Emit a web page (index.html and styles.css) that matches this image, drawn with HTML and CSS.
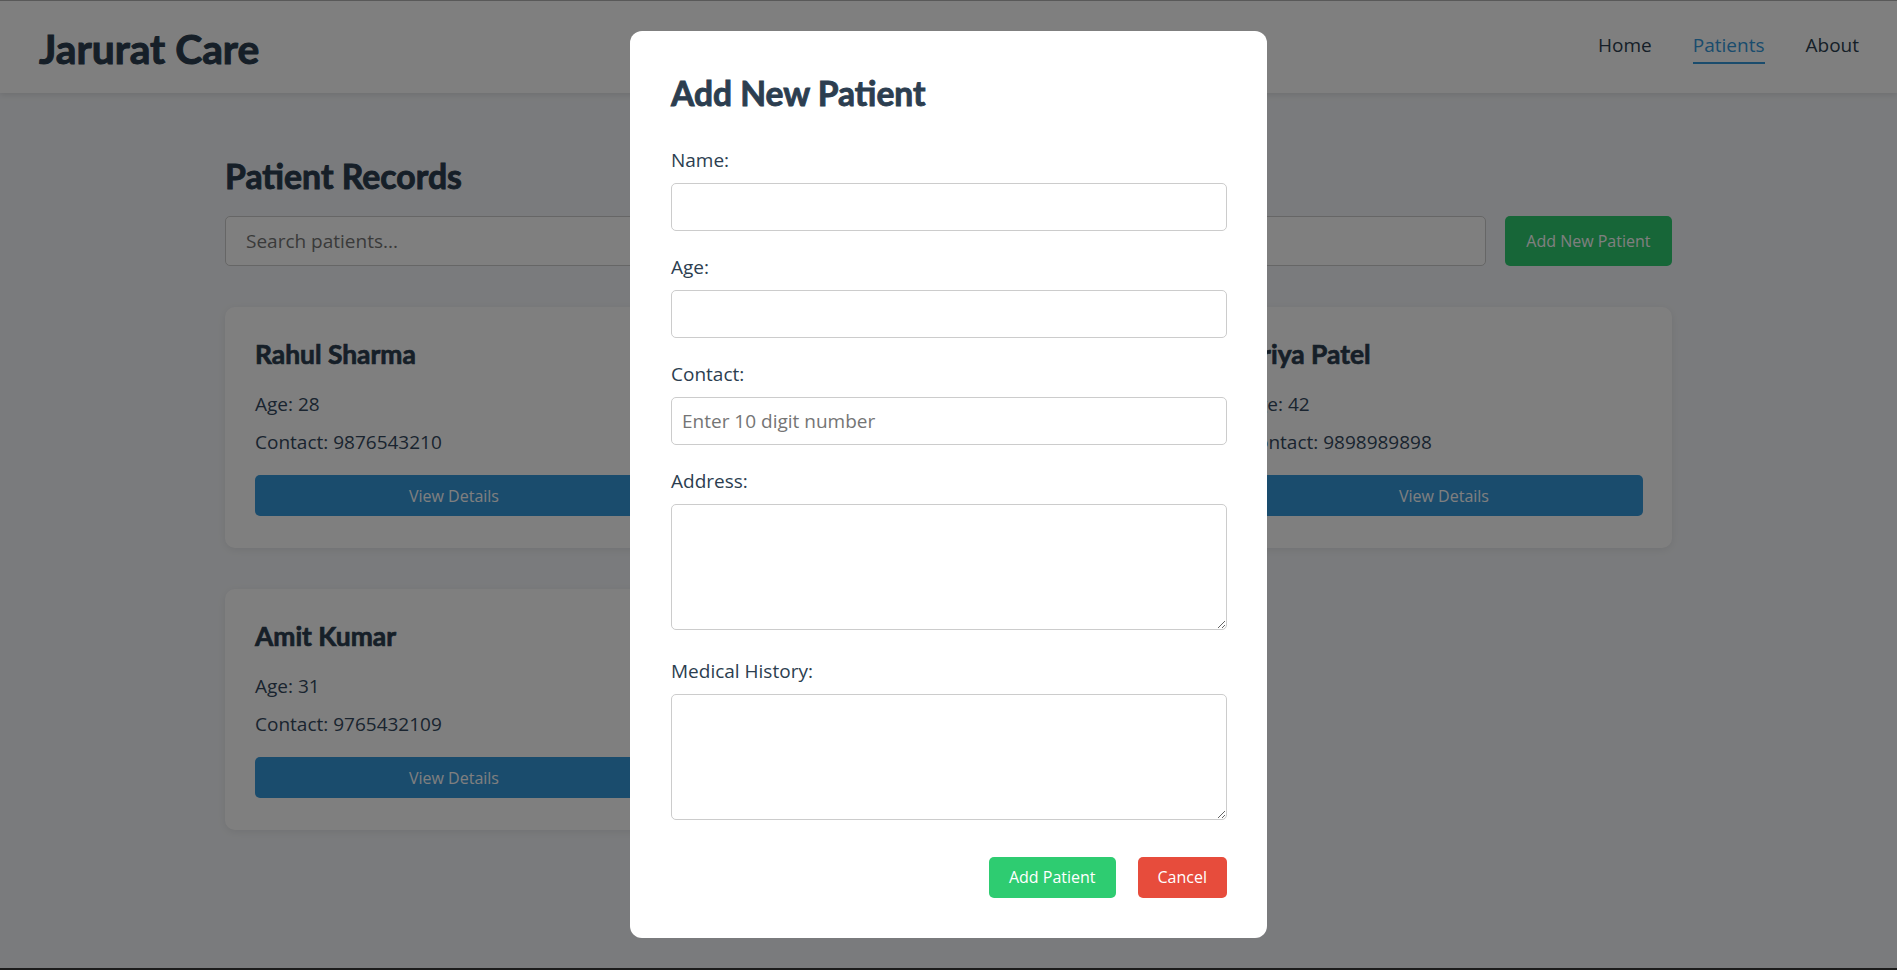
FILE: index.html
```html
<!DOCTYPE html>
<html lang="en">
<head>
<meta charset="utf-8">
<title>Jarurat Care - Patients</title>
<link rel="stylesheet" href="styles.css">
</head>
<body>
<header class="site-header">
  <div class="brand">Jarurat Care</div>
  <nav class="nav">
    <a class="nav-link" href="#">Home</a>
    <a class="nav-link active" href="#">Patients</a>
    <a class="nav-link" href="#">About</a>
  </nav>
</header>

<main class="container">
  <h1 class="page-title">Patient Records</h1>
  <div class="toolbar">
    <input class="search" type="text" placeholder="Search patients...">
    <button class="btn btn-green btn-lg">Add New Patient</button>
  </div>

  <div class="grid">
    <div class="card">
      <h3 class="card-name">Rahul Sharma</h3>
      <p class="card-line">Age: 28</p>
      <p class="card-line">Contact: 9876543210</p>
      <button class="btn btn-blue btn-block">View Details</button>
    </div>
    <div class="card">
      <h3 class="card-name">Sneha Gupta</h3>
      <p class="card-line">Age: 35</p>
      <p class="card-line">Contact: 9123456789</p>
      <button class="btn btn-blue btn-block">View Details</button>
    </div>
    <div class="card">
      <h3 class="card-name">Priya Patel</h3>
      <p class="card-line">Age: 42</p>
      <p class="card-line">Contact: 9898989898</p>
      <button class="btn btn-blue btn-block">View Details</button>
    </div>
    <div class="card">
      <h3 class="card-name">Amit Kumar</h3>
      <p class="card-line">Age: 31</p>
      <p class="card-line">Contact: 9765432109</p>
      <button class="btn btn-blue btn-block">View Details</button>
    </div>
  </div>
</main>

<div class="overlay">
  <div class="modal">
    <h2 class="modal-title">Add New Patient</h2>
    <form class="form">
      <div class="form-group">
        <label class="form-label">Name:</label>
        <input class="form-input" type="text">
      </div>
      <div class="form-group">
        <label class="form-label">Age:</label>
        <input class="form-input" type="text">
      </div>
      <div class="form-group">
        <label class="form-label">Contact:</label>
        <input class="form-input" type="text" placeholder="Enter 10 digit number">
      </div>
      <div class="form-group form-group-area">
        <label class="form-label">Address:</label>
        <textarea class="form-input form-area"></textarea>
      </div>
      <div class="form-group form-group-area form-group-last">
        <label class="form-label">Medical History:</label>
        <textarea class="form-input form-area"></textarea>
      </div>
      <div class="form-actions">
        <button type="button" class="btn btn-green">Add Patient</button>
        <button type="button" class="btn btn-red">Cancel</button>
      </div>
    </form>
  </div>
</div>
</body>
</html>
```

FILE: styles.css
```css
* {
  box-sizing: border-box;
}

html, body {
  margin: 0;
  padding: 0;
}

body {
  font-family: "Open Sans", "Noto Sans", sans-serif;
  background: #f5f7fa;
  color: #34495e;
  min-height: 970px;
}

.site-header {
  height: 93px;
  background: #ffffff;
  box-shadow: 0 2px 6px rgba(0, 0, 0, 0.1);
  display: flex;
  align-items: center;
  justify-content: space-between;
  padding: 0 38px 0 39px;
}

.brand {
  font-family: Lato, "Open Sans", sans-serif;
  font-size: 40.8px;
  font-weight: 700;
  color: #2c3e50;
  -webkit-text-stroke: 1px #2c3e50;
  padding-top: 4px;
}

.nav {
  display: flex;
  gap: 41px;
  padding-top: 2px;
}

.nav-link {
  font-size: 19px;
  color: #2c3e50;
  text-decoration: none;
  padding-bottom: 4px;
  border-bottom: 2px solid transparent;
}

.nav-link.active {
  color: #3498db;
  border-bottom-color: #3498db;
}

.container {
  max-width: 1447px;
  margin: 0 auto;
  padding-top: 63px;
}

.page-title {
  margin: 0 0 20px;
  font-family: Lato, "Open Sans", sans-serif;
  font-size: 33.8px;
  line-height: 40px;
  font-weight: 700;
  color: #2c3e50;
  -webkit-text-stroke: 0.9px #2c3e50;
}

.toolbar {
  display: flex;
  gap: 19px;
  margin-bottom: 41px;
}

.search {
  flex: 1;
  height: 50px;
  padding: 0 20px;
  border: 1px solid #cccccc;
  border-radius: 5px;
  font-family: inherit;
  font-size: 19px;
  color: #34495e;
  background: #ffffff;
}

.btn {
  border: none;
  border-radius: 5px;
  color: #ffffff;
  font-family: inherit;
  font-size: 16px;
  height: 41px;
  padding: 0 20px;
  cursor: pointer;
}

.btn-lg {
  height: 50px;
  padding: 0 21.5px;
}

.btn-green {
  background: #2ecc71;
}

.btn-blue {
  background: #3498db;
}

.btn-red {
  background: #e74c3c;
}

.btn-block {
  display: block;
  width: 100%;
}

.grid {
  display: grid;
  grid-template-columns: repeat(3, 1fr);
  column-gap: 38px;
  row-gap: 41px;
}

.card {
  background: #ffffff;
  border-radius: 10px;
  box-shadow: 0 2px 8px rgba(0, 0, 0, 0.08);
  padding: 30px 29px 32px 30px;
}

.card-name {
  margin: 0 0 20px;
  font-family: Lato, "Open Sans", sans-serif;
  font-size: 26.4px;
  line-height: 34px;
  font-weight: 700;
  color: #2c3e50;
  -webkit-text-stroke: 0.7px #2c3e50;
}

.card-line {
  margin: 0 0 11px;
  font-size: 19px;
  line-height: 27px;
  color: #34495e;
}

.card-line + .btn-block {
  margin-top: 19px;
}

.overlay {
  position: fixed;
  inset: 0;
  background: rgba(0, 0, 0, 0.5);
  display: flex;
  align-items: center;
  justify-content: center;
  border-top: 1px solid rgba(0, 0, 0, 0.3);
  border-bottom: 2px solid #1c1c1c;
}

.modal {
  width: 637px;
  background: #ffffff;
  border-radius: 12px;
  padding: 40px 40px 40px 41px;
  margin-bottom: 1px;
}

.modal-title {
  margin: 0 0 32px;
  font-family: Lato, "Open Sans", sans-serif;
  font-size: 33.6px;
  line-height: 44px;
  font-weight: 700;
  color: #2c3e50;
  -webkit-text-stroke: 0.9px #2c3e50;
}

.form-group {
  margin-bottom: 23px;
}

.form-group-area {
  margin-bottom: 28px;
}

.form-group-last {
  margin-bottom: 0;
}

.form-label {
  display: block;
  font-size: 19px;
  line-height: 26px;
  color: #2c3e50;
  margin-bottom: 10px;
}

.form-input {
  display: block;
  width: 100%;
  height: 48px;
  padding: 10px;
  border: 1px solid #cccccc;
  border-radius: 5px;
  font-family: inherit;
  font-size: 19px;
  color: #34495e;
  background: #ffffff;
}

.form-area {
  height: 126px;
  resize: vertical;
}

.form-actions {
  display: flex;
  justify-content: flex-end;
  gap: 22px;
  margin-top: 37px;
}
```
